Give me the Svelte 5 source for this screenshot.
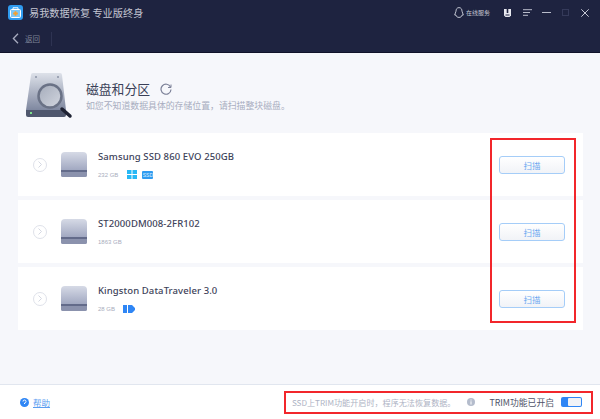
<script>
	const disks = [
		{ name: 'Samsung SSD 860 EVO 250GB', size: '232 GB', win: true, ssd: true },
		{ name: 'ST2000DM008-2FR102', size: '1863 GB' },
		{ name: 'Kingston DataTraveler 3.0', size: '28 GB', usb: true }
	];
</script>

<div class="app">
	<header class="topbar">
		<div class="titlerow">
			<svg class="logo" width="15" height="15" viewBox="0 0 15 15">
				<rect width="15" height="15" rx="3" fill="#2f9bf0" />
				<rect x="2.500" y="4.500" width="10" height="8" rx="1" fill="#7cc8fa" stroke="#fff" />
				<path d="M5 4.500V2.800h5v1.700" fill="none" stroke="#fff" />
				<path d="M7.500 6.200v4.600M5.200 8.500h4.600" stroke="#f7a02c" stroke-width="1.800" />
			</svg>
			<span class="apptitle">易我数据恢复 专业版终身</span>
			<div class="winctl">
				<svg class="qq" width="10" height="11" viewBox="0 0 10 11">
					<path d="M5 .6C2.900.6 2 2.300 2 4.200L.7 8 2 8.100C2.300 9.600 3.200 10.400 5 10.400s2.700-.8 3-2.300L9.300 8 8 4.200C8 2.300 7.100.6 5 .6z" fill="none" stroke="#cfd2de" stroke-width=".9" />
				</svg>
				<span class="service">在线服务</span>
				<svg class="ico-u" width="7" height="8" viewBox="0 0 7 8">
					<path d="M0 0h7v6.500L5.500 8h-4L0 6.500z" fill="#e8e9f0" />
					<rect x="2.700" y="0" width="1.600" height="4" fill="#1e2340" />
					<rect x="1.500" y="5.500" width="4" height="1" fill="#1e2340" />
				</svg>
				<svg class="ico-menu" width="9" height="7" viewBox="0 0 9 7">
					<path d="M0 .7h9M0 3.500h7M0 6.300h5" stroke="#b9bccb" stroke-width="1" />
				</svg>
				<svg class="ico-min" width="9" height="3" viewBox="0 0 9 3">
					<path d="M0 1.500h9" stroke="#b9bccb" stroke-width="1" />
				</svg>
				<svg class="ico-max" width="7" height="7" viewBox="0 0 7 7">
					<rect x=".5" y=".5" width="6" height="6" fill="none" stroke="#353a5a" />
				</svg>
				<svg class="ico-close" width="8" height="8" viewBox="0 0 8 8">
					<path d="M.3.3l7.400 7.400M7.700.3L.3 7.700" stroke="#c6c8d5" stroke-width="1" />
				</svg>
			</div>
		</div>
		<div class="backrow">
			<svg width="7" height="11" viewBox="0 0 7 11">
				<path d="M6 .8L1.400 5.500 6 10.200" fill="none" stroke="#a9adc0" stroke-width="1.300" />
			</svg>
			<span class="back">返回</span>
			<span class="sep"></span>
		</div>
	</header>

	<main class="content">
		<section class="intro">
			<svg class="hero" width="48" height="47" viewBox="0 0 48 47">
				<defs>
					<linearGradient id="hd" x1="0" y1="0" x2="0" y2="1">
						<stop offset="0" stop-color="#dde1e9" />
						<stop offset="1" stop-color="#7f88a0" />
					</linearGradient>
					<linearGradient id="lens" x1="0" y1="0" x2="1" y2="1">
						<stop offset="0" stop-color="#a4abba" />
						<stop offset="1" stop-color="#d3d7e0" />
					</linearGradient>
				</defs>
				<path d="M8 0h27a2 2 0 0 1 2 2l4 35H1L6 2a2 2 0 0 1 2-2z" fill="url(#hd)" />
				<path d="M1 37h40v5a2 2 0 0 1-2 2H3a2 2 0 0 1-2-2z" fill="#4f576d" />
				<circle cx="11" cy="4" r="1" fill="#8b93a6" />
				<circle cx="33" cy="4" r="1" fill="#8b93a6" />
				<rect x="5" y="39" width="2" height="2" fill="#7be08a" />
				<circle cx="25" cy="23" r="11.500" fill="url(#lens)" stroke="#6a7286" stroke-width="2.500" />
				<path d="M35 34l1 1" stroke="#8b93a6" stroke-width="2.500" />
				<path d="M37 36l8 7" stroke="#1e2233" stroke-width="3.500" stroke-linecap="round" />
			</svg>
			<div class="intro-text">
				<div class="heading">
					<h1>磁盘和分区</h1>
					<svg width="12" height="12" viewBox="0 0 12 12">
						<path d="M10.500 4A5 5 0 1 0 11 6.500" fill="none" stroke="#7c8198" stroke-width="1.200" />
						<path d="M11 1.500V4.500H8" fill="none" stroke="#7c8198" stroke-width="1" />
					</svg>
				</div>
				<p>如您不知道数据具体的存储位置，请扫描整块磁盘。</p>
			</div>
		</section>

		<div class="cards">
			{#each disks as d}
				<article class="card">
					<span class="expand">
						<svg width="4" height="7" viewBox="0 0 4 7">
							<path d="M.5.5l3 3-3 3" fill="none" stroke="#d5d8e2" />
						</svg>
					</span>
					<div class="drive">
						<div class="drive-base"></div>
					</div>
					<div class="info">
						<div class="name">{d.name}</div>
						<div class="meta">
							<span class="size">{d.size}</span>
							{#if d.win}
								<svg class="win" width="10" height="9" viewBox="0 0 10 9">
									<path d="M0 0h4.500v4H0zM5.500 0H10v4H5.500zM0 5h4.500v4H0zM5.500 5H10v4H5.500z" fill="#27b8f5" />
								</svg>
							{/if}
							{#if d.ssd}
								<span class="ssd">SSD</span>
							{/if}
							{#if d.usb}
								<svg class="usb" width="12" height="8" viewBox="0 0 12 8">
									<path d="M0 0h4v8H0zM5 0h4l3 3v2L9 8H5z" fill="#2f86f5" />
								</svg>
							{/if}
						</div>
					</div>
					<button class="scan">扫描</button>
				</article>
			{/each}
		</div>
	</main>

	<footer class="footer">
		<a class="help" href="#help">
			<svg width="9" height="9" viewBox="0 0 9 9">
				<circle cx="4.500" cy="4.500" r="4.500" fill="#2f86f5" />
				<path d="M3 3.500a1.500 1.500 0 1 1 1.500 1.500v1" fill="none" stroke="#fff" />
			</svg>
			<span>帮助</span>
		</a>
		<div class="trim">
			<span class="trim-note">SSD上TRIM功能开启时，程序无法恢复数据。</span>
			<svg class="trim-info" width="8" height="8" viewBox="0 0 8 8">
				<circle cx="4" cy="4" r="4" fill="#b4bccc" />
				<path d="M4 1.500v1M4 3.300v3.200" stroke="#fff" />
			</svg>
			<span class="trim-label">TRIM功能已开启</span>
			<span class="toggle"><span class="knob"></span></span>
		</div>
	</footer>

	<div class="mark mark-scan"></div>
	<div class="mark mark-trim"></div>
</div>

<style>
	:global(body) {
		margin: 0;
	}
	.app {
		position: relative;
		width: 600px;
		height: 419px;
		display: flex;
		flex-direction: column;
		overflow: hidden;
		background: #f6f7fb;
		font-family: "Noto Sans CJK SC", "Liberation Sans", sans-serif;
	}
	.topbar {
		height: 53px;
		flex: none;
		box-sizing: border-box;
		background: #1e2340;
		border-bottom: 1px solid #10132a;
	}
	.titlerow {
		display: flex;
		align-items: center;
		height: 25px;
		padding-left: 8px;
	}
	.apptitle {
		margin-left: 6px;
		font-size: 10.200px;
		color: #c4c6d2;
	}
	.winctl {
		margin-left: auto;
		display: flex;
		align-items: center;
		height: 100%;
	}
	.qq {
		margin-right: 2px;
	}
	.service {
		font-size: 6px;
		color: #c4c6d2;
		margin-right: 14px;
	}
	.ico-u {
		margin-right: 12px;
	}
	.ico-menu {
		margin-right: 10px;
	}
	.ico-min {
		margin-right: 11px;
	}
	.ico-max {
		margin-right: 12px;
	}
	.ico-close {
		margin-right: 11px;
	}
	.backrow {
		display: flex;
		align-items: center;
		height: 27px;
		padding-left: 12px;
	}
	.back {
		margin-left: 6px;
		font-size: 7.500px;
		color: #7f8398;
	}
	.sep {
		width: 1px;
		height: 14px;
		margin-left: 11px;
		background: #2e3352;
	}
	.content {
		flex: 1;
		padding: 0 17px 0 18px;
	}
	.intro {
		display: flex;
		align-items: flex-start;
		height: 80px;
		padding: 20px 0 0 7px;
		box-sizing: border-box;
	}
	.intro-text {
		margin-left: 13px;
		padding-top: 7px;
	}
	.heading {
		display: flex;
		align-items: center;
		gap: 10px;
	}
	h1 {
		margin: 0;
		font-size: 12.800px;
		line-height: 18px;
		font-weight: 400;
		color: #3a3f57;
	}
	.intro-text p {
		margin: 2px 0 0;
		font-size: 8.870px;
		line-height: 12px;
		color: #a8adc0;
	}
	.cards {
		display: flex;
		flex-direction: column;
		gap: 4px;
	}
	.card {
		height: 63px;
		box-sizing: border-box;
		display: flex;
		align-items: center;
		background: #fff;
		padding: 0 18px 0 15px;
	}
	.expand {
		width: 14px;
		height: 14px;
		box-sizing: border-box;
		border: 1px solid #dfe2ea;
		border-radius: 50%;
		display: flex;
		align-items: center;
		justify-content: center;
	}
	.drive {
		width: 26px;
		height: 25px;
		margin-left: 14px;
		border-radius: 4px 4px 2px 2px;
		background: linear-gradient(#d6dae6, #8d95b3);
		display: flex;
		align-items: flex-end;
	}
	.drive-base {
		flex: 1;
		height: 7px;
		box-sizing: border-box;
		border-top: 2px solid #636b8a;
		border-radius: 0 0 2px 2px;
		background: #8b92ad;
	}
	.info {
		flex: 1;
		margin-left: 11px;
	}
	.name {
		font-family: "Noto Sans", "Open Sans", sans-serif;
		font-size: 9.500px;
		line-height: 14px;
		font-weight: 500;
		letter-spacing: 0.1px;
		color: #3d4259;
	}
	.meta {
		display: flex;
		align-items: center;
		height: 10px;
		margin-top: 6px;
	}
	.size {
		font-family: "Liberation Sans", sans-serif;
		font-size: 6px;
		color: #a8adbd;
		margin-right: 9px;
	}
	.win {
		margin-right: 5px;
	}
	.ssd {
		width: 11px;
		height: 8px;
		border-radius: 1px;
		background: #2f9bf0;
		color: #dff0ff;
		font-family: "Liberation Sans", sans-serif;
		font-size: 5px;
		line-height: 8px;
		text-align: center;
	}
	.usb {
		margin-left: -1px;
	}
	.scan {
		width: 66px;
		height: 18px;
		padding: 0;
		border: 1px solid #a5cdf8;
		border-radius: 3px;
		background: linear-gradient(#fff, #f1f3f7);
		color: #6aa8f0;
		font-family: inherit;
		font-size: 8.500px;
	}
	.footer {
		height: 35px;
		flex: none;
		box-sizing: border-box;
		display: flex;
		align-items: center;
		justify-content: space-between;
		padding: 0 18px 0 20px;
		background: #fff;
		border-top: 1px solid #e1e6ef;
	}
	.help {
		display: flex;
		align-items: center;
		gap: 4px;
		font-size: 8.500px;
		color: #5b9df0;
	}
	.trim {
		display: flex;
		align-items: center;
		height: 22px;
	}
	.trim-note {
		font-size: 8.100px;
		color: #aeb3c4;
	}
	.trim-info {
		margin-left: 12px;
	}
	.trim-label {
		margin-left: 14px;
		font-size: 8.800px;
		color: #4e5268;
	}
	.toggle {
		width: 21px;
		height: 10px;
		margin-left: 7px;
		box-sizing: border-box;
		padding: 1px;
		border-radius: 2px;
		background: #2f86f5;
		display: flex;
		justify-content: flex-end;
	}
	.knob {
		width: 13px;
		height: 8px;
		border-radius: 1px;
		background: #f1f3f7;
	}
	.mark {
		position: absolute;
		box-sizing: border-box;
		border: 2px solid #f2262b;
	}
	.mark-scan {
		left: 490px;
		top: 138px;
		width: 86px;
		height: 185px;
	}
	.mark-trim {
		left: 284px;
		top: 391px;
		width: 309px;
		height: 23px;
	}
</style>
